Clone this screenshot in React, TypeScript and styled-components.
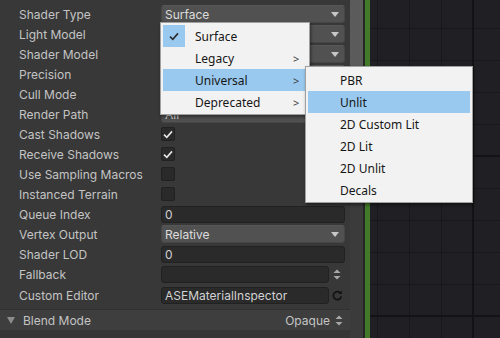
import React from 'react';
import styled, { createGlobalStyle } from 'styled-components';

const GlobalStyle = createGlobalStyle`
  html, body {
    margin: 0;
    padding: 0;
    background: #383838;
    overflow: hidden;
  }
  * { box-sizing: border-box; }
`;

type Field =
  | { kind: 'dropdown'; value: string }
  | { kind: 'check'; checked: boolean }
  | { kind: 'text'; value: string; trailing?: 'spinner' | 'refresh' };

const rows: { label: string; field: Field; tall?: boolean }[] = [
  { label: 'Shader Type', field: { kind: 'dropdown', value: 'Surface' } },
  { label: 'Light Model', field: { kind: 'dropdown', value: 'Standard' } },
  { label: 'Shader Model', field: { kind: 'dropdown', value: '4.5' } },
  { label: 'Precision', field: { kind: 'dropdown', value: 'Float' } },
  { label: 'Cull Mode', field: { kind: 'dropdown', value: 'Back' } },
  { label: 'Render Path', field: { kind: 'dropdown', value: 'All' } },
  { label: 'Cast Shadows', field: { kind: 'check', checked: true } },
  { label: 'Receive Shadows', field: { kind: 'check', checked: true } },
  { label: 'Use Sampling Macros', field: { kind: 'check', checked: false } },
  { label: 'Instanced Terrain', field: { kind: 'check', checked: false } },
  { label: 'Queue Index', field: { kind: 'text', value: '0' } },
  { label: 'Vertex Output', field: { kind: 'dropdown', value: 'Relative' } },
  { label: 'Shader LOD', field: { kind: 'text', value: '0' } },
  { label: 'Fallback', field: { kind: 'text', value: '', trailing: 'spinner' }, tall: true },
  { label: 'Custom Editor', field: { kind: 'text', value: 'ASEMaterialInspector', trailing: 'refresh' }, tall: true },
];

const typeMenu = [
  { label: 'Surface', checked: true },
  { label: 'Legacy', sub: true },
  { label: 'Universal', sub: true, active: true },
  { label: 'Deprecated', sub: true },
];

const universalMenu = [
  { label: 'PBR' },
  { label: 'Unlit', active: true },
  { label: '2D Custom Lit' },
  { label: '2D Lit' },
  { label: '2D Unlit' },
  { label: 'Decals' },
];

const SpinnerIcon = () => (
  <svg width="8" height="11" viewBox="0 0 8 11">
    <path d="M4 0.5 L7.5 4 L0.5 4 Z" fill="#a8a8a8" />
    <path d="M4 10.5 L7.5 7 L0.5 7 Z" fill="#a8a8a8" />
  </svg>
);

const RefreshIcon = () => (
  <svg width="11" height="11" viewBox="0 0 11 11">
    <path d="M8.6 3.2 A4 4 0 1 0 9.3 6.3" fill="none" stroke="#121212" strokeWidth="1.7" />
    <path d="M6.4 3.6 L10 4.1 L9.6 0.6 Z" fill="#121212" />
  </svg>
);

const CheckMark = ({ color }: { color: string }) => (
  <svg width="10" height="9" viewBox="0 0 10 9">
    <path d="M1 4.6 L3.8 7.3 L9 1.4" fill="none" stroke={color} strokeWidth="1.6" />
  </svg>
);

const App: React.FC = () => {
  return (
    <Screen>
      <GlobalStyle />
      <Inspector>
        {rows.map((row) => (
          <Row key={row.label} $tall={row.tall}>
            <Label>{row.label}</Label>
            <FieldArea>
              {row.field.kind === 'dropdown' && (
                <Dropdown>
                  <span>{row.field.value}</span>
                  <Arrow />
                </Dropdown>
              )}
              {row.field.kind === 'check' && (
                <CheckBox>{row.field.checked && <CheckMark color="#e6e6e6" />}</CheckBox>
              )}
              {row.field.kind === 'text' && (
                <>
                  <TextField>{row.field.value}</TextField>
                  {row.field.trailing && (
                    <Trailing>
                      {row.field.trailing === 'spinner' ? <SpinnerIcon /> : <RefreshIcon />}
                    </Trailing>
                  )}
                </>
              )}
            </FieldArea>
          </Row>
        ))}
        <Header>
          <Foldout />
          <HeaderTitle>Blend Mode</HeaderTitle>
          <HeaderValue>
            Opaque
            <SpinnerIcon />
          </HeaderValue>
        </Header>
        <Rest />
      </Inspector>
      <ScrollBar>
        <Thumb />
      </ScrollBar>
      <Divider />
      <GreenEdge />
      <Canvas />

      <Menu $left={160} $top={22} $width={150}>
        {typeMenu.map((item) => (
          <MenuItem key={item.label} $active={item.active}>
            <CheckCell $on={item.checked}>{item.checked && <CheckMark color="#2b2b2b" />}</CheckCell>
            <MenuText>{item.label}</MenuText>
            <Chevron>{item.sub ? '>' : ''}</Chevron>
          </MenuItem>
        ))}
      </Menu>
      <Menu $left={305} $top={66} $width={168}>
        {universalMenu.map((item) => (
          <MenuItem key={item.label} $active={item.active}>
            <CheckCell />
            <MenuText>{item.label}</MenuText>
            <Chevron />
          </MenuItem>
        ))}
      </Menu>
    </Screen>
  );
};

export default App;

const Screen = styled.div`
  position: relative;
  display: flex;
  width: 500px;
  height: 338px;
  overflow: hidden;
  font-family: Inter, 'Noto Sans', sans-serif;
  font-size: 12px;
`;

const Inspector = styled.div`
  width: 350px;
  display: flex;
  flex-direction: column;
  padding-top: 4px;
  background: #383838;
`;

const Row = styled.div<{ $tall?: boolean }>`
  display: flex;
  align-items: center;
  height: ${(p) => (p.$tall ? '21px' : '20px')};
  padding-left: 19px;
`;

const Label = styled.div`
  width: 142px;
  color: #c4c4c4;
  white-space: nowrap;
`;

const FieldArea = styled.div`
  width: 184px;
  display: flex;
  align-items: center;
`;

const Dropdown = styled.div`
  flex: 1;
  height: 18px;
  display: flex;
  align-items: center;
  justify-content: space-between;
  padding: 0 5px 0 3px;
  background: #515151;
  border: 1px solid #464646;
  border-top-color: #575757;
  border-radius: 3px;
  color: #dcdcdc;
`;

const Arrow = styled.div`
  width: 0;
  height: 0;
  border-left: 4px solid transparent;
  border-right: 4px solid transparent;
  border-top: 5px solid #c8c8c8;
`;

const CheckBox = styled.div`
  width: 14px;
  height: 14px;
  display: flex;
  align-items: center;
  justify-content: center;
  background: #2a2a2a;
  border: 1px solid #212121;
  border-radius: 2px;
`;

const TextField = styled.div`
  flex: 1;
  height: 17px;
  display: flex;
  align-items: center;
  padding-left: 3px;
  background: #2a2a2a;
  border: 1px solid #212121;
  border-radius: 3px;
  color: #d2d2d2;
`;

const Trailing = styled.div`
  width: 16px;
  display: flex;
  justify-content: center;
  align-items: center;
`;

const Header = styled.div`
  margin-top: 3px;
  height: 21px;
  display: flex;
  align-items: center;
  padding: 0 7px 0 7px;
  background: #3e3e3e;
  border-top: 1px solid #303030;
`;

const Foldout = styled.div`
  width: 0;
  height: 0;
  border-left: 4px solid transparent;
  border-right: 4px solid transparent;
  border-top: 7px solid #8c8c8c;
`;

const HeaderTitle = styled.div`
  margin-left: 8px;
  color: #c4c4c4;
  flex: 1;
`;

const HeaderValue = styled.div`
  display: flex;
  align-items: center;
  gap: 5px;
  color: #c4c4c4;
`;

const Rest = styled.div`
  flex: 1;
  background: #353535;
`;

const ScrollBar = styled.div`
  width: 13px;
  background: #3b3b3b;
`;

const Thumb = styled.div`
  height: 150px;
  background: #5b5b5b;
`;

const Divider = styled.div`
  width: 2px;
  background: #262626;
`;

const GreenEdge = styled.div`
  width: 5px;
  background: #437a29;
`;

const Canvas = styled.div`
  flex: 1;
  background-color: #202024;
  background-image:
    linear-gradient(to right, #131315 2px, transparent 2px),
    linear-gradient(to bottom, #131315 2px, transparent 2px),
    linear-gradient(to right, #18181b 1px, transparent 1px),
    linear-gradient(to bottom, #18181b 1px, transparent 1px);
  background-size: 160px 160px, 160px 160px, 32px 32px, 32px 32px;
  background-position: 102px 0, 0 -5px, 7px 0, 0 28px;
`;

const Menu = styled.div<{ $left: number; $top: number; $width: number }>`
  position: absolute;
  left: ${(p) => p.$left}px;
  top: ${(p) => p.$top}px;
  width: ${(p) => p.$width}px;
  padding: 2px 2px 1px 2px;
  background: #f2f2f2;
  border: 1px solid #a0a0a0;
  box-shadow: 1px 2px 3px rgba(0, 0, 0, 0.45);
  font-family: 'Noto Sans', 'Open Sans', sans-serif;
  font-size: 12px;
  color: #161616;
`;

const MenuItem = styled.div<{ $active?: boolean }>`
  display: flex;
  align-items: center;
  height: 22px;
  background: ${(p) => (p.$active ? '#99c9ef' : 'transparent')};
`;

const CheckCell = styled.div<{ $on?: boolean }>`
  width: 22px;
  height: 22px;
  display: flex;
  align-items: center;
  justify-content: center;
  background: ${(p) => (p.$on ? '#99c9ef' : 'transparent')};
`;

const MenuText = styled.div`
  flex: 1;
  margin-left: 10px;
  white-space: nowrap;
`;

const Chevron = styled.div`
  width: 14px;
  color: #404040;
  font-size: 11px;
`;
